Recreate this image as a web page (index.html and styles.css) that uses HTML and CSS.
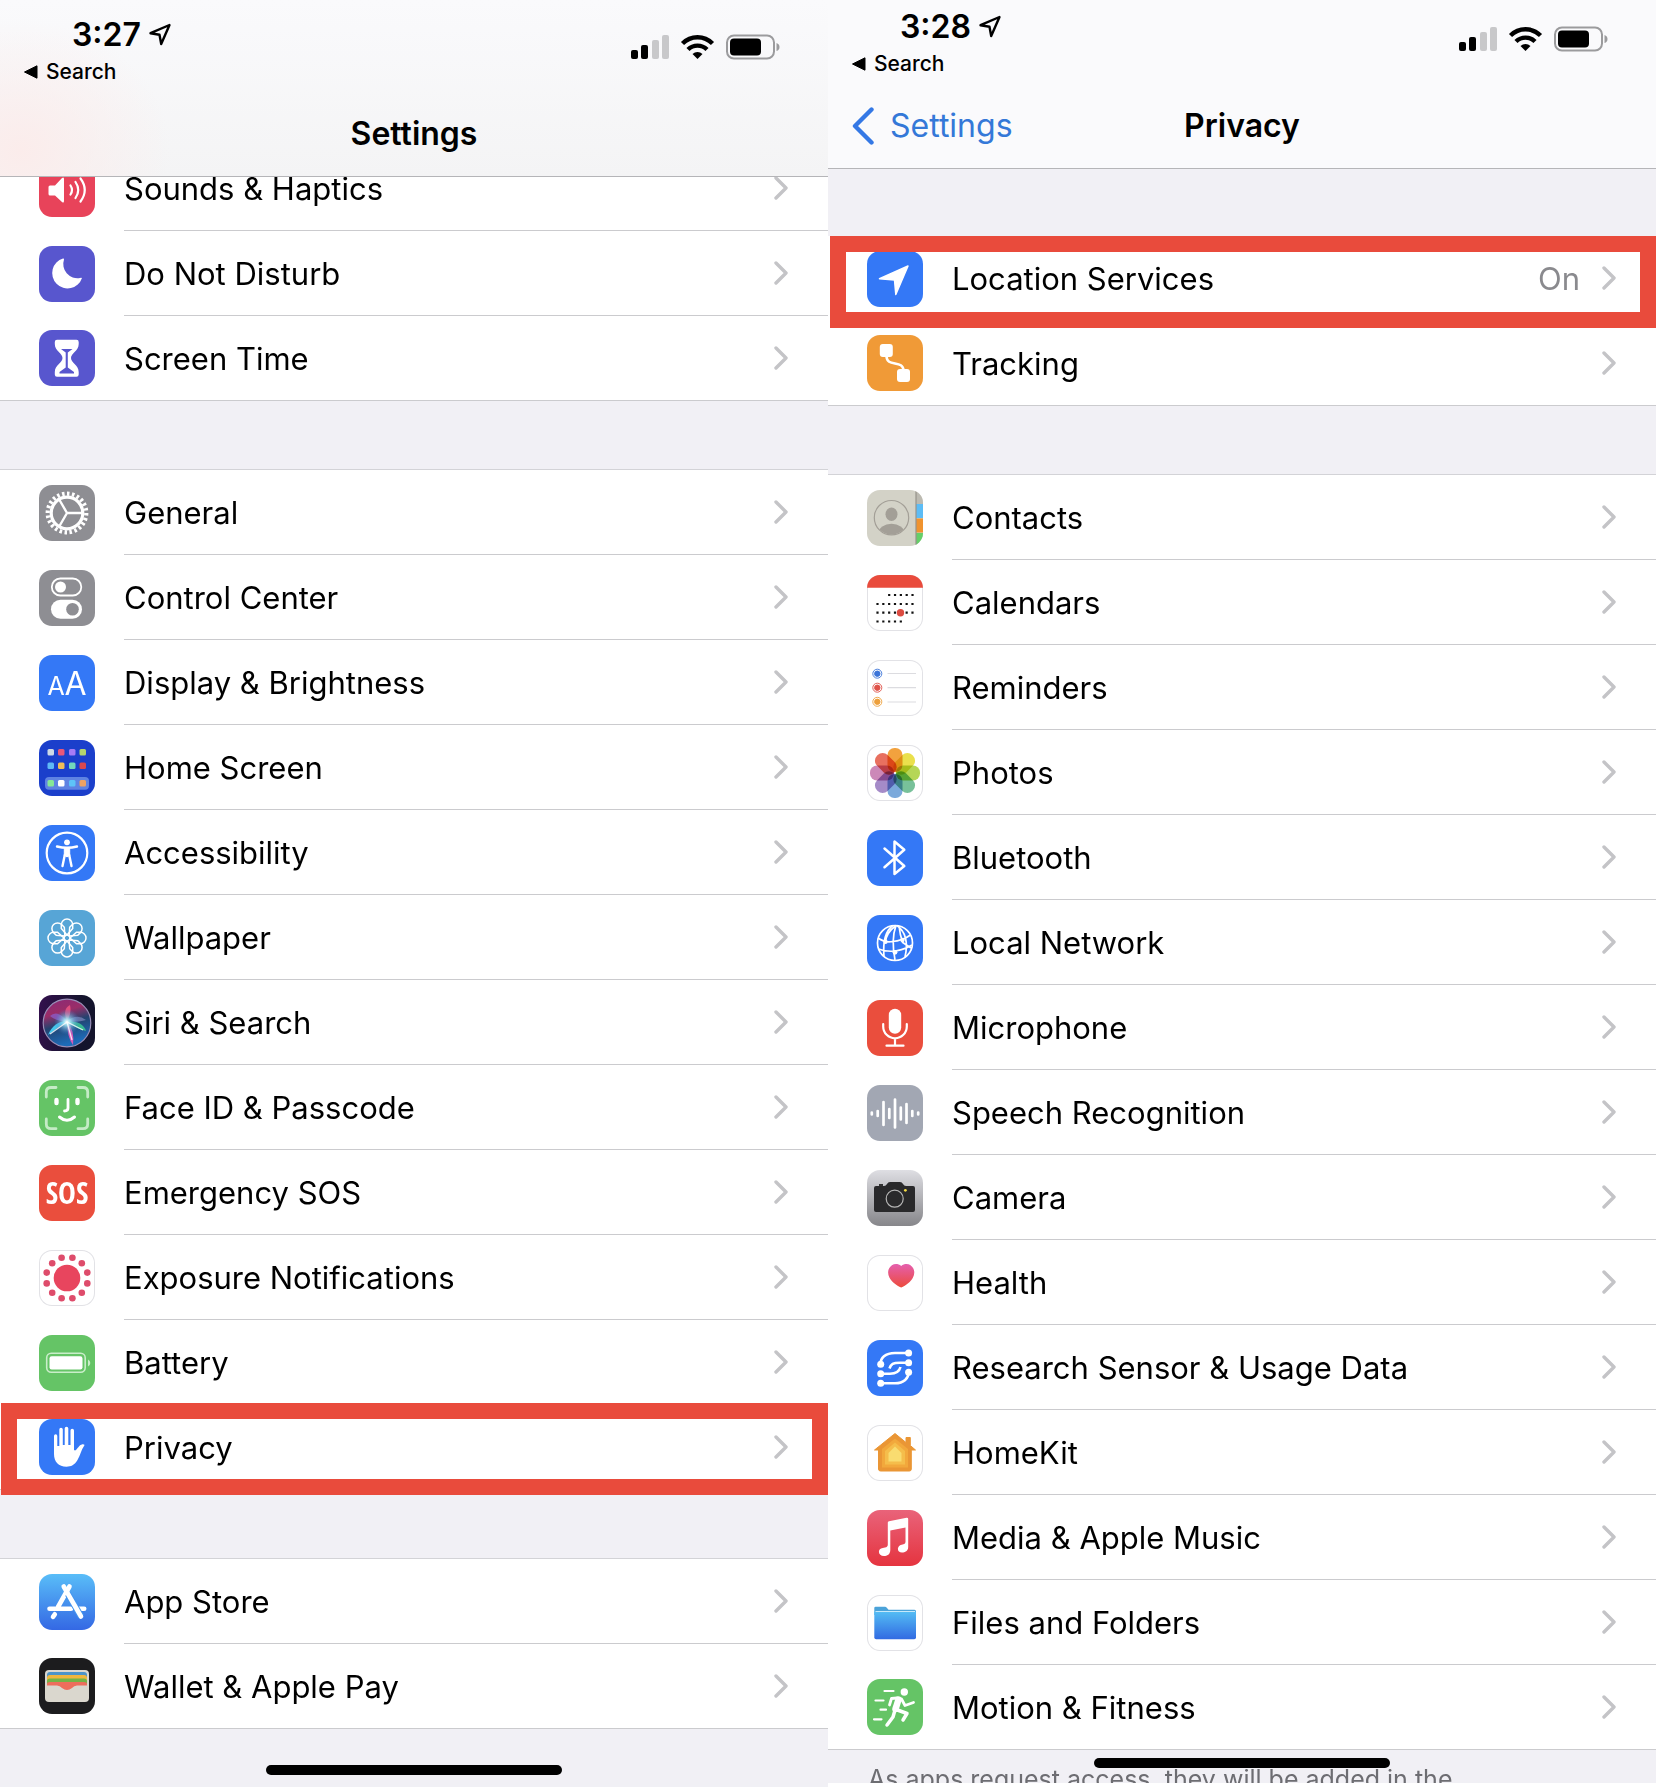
FILE: index.html
```html
<!DOCTYPE html>
<html lang="en">
<head>
<meta charset="utf-8">
<meta name="viewport" content="width=device-width, initial-scale=1">
<title>Settings and Privacy</title>
<link rel="stylesheet" href="styles.css">
</head>
<body>
<svg class="defs" aria-hidden="true">
  <symbol id="chevron" viewBox="0 0 14 24"><path d="M2 2 L12 12 L2 22" fill="none" stroke="#c4c4c7" stroke-width="3.4" stroke-linecap="round" stroke-linejoin="round"/></symbol>
  <symbol id="arrow" viewBox="0 0 24 24"><path d="M21.5 2 L2.5 10.2 L11.5 11.8 L13.2 21 Z" fill="none" stroke="#000" stroke-width="2.4" stroke-linejoin="round"/></symbol>
  <symbol id="triangle" viewBox="0 0 14 14"><path d="M0.5 7 L13 0.8 V13.2 Z" fill="#000" stroke="#000" stroke-linejoin="round"/></symbol>
  <symbol id="status-icons" viewBox="0 0 150 26">
    <rect x="0" y="16" width="7" height="9" rx="2"/><rect x="10" y="11" width="7" height="14" rx="2"/>
    <rect x="21" y="6" width="7" height="19" rx="2" fill="#c8c8ca"/><rect x="31" y="1" width="7" height="24" rx="2" fill="#c8c8ca"/>
    <g fill="none" stroke="#000" stroke-width="4.4"><path d="M51.5 9.5 A21 21 0 0 1 81.500 9.500"/><path d="M57 15.500 A13.500 13.500 0 0 1 76 15.500"/></g>
    <path d="M61.500 20 A7.500 7.500 0 0 1 71.500 20 L66.500 25 Z"/>
    <rect x="96" y="1.500" width="47" height="23" rx="7" fill="none" stroke="#9b9b9d" stroke-width="2"/>
    <rect x="99" y="4.500" width="31" height="17" rx="4"/><path d="M145.500 9 Q148.500 10 148.500 13 Q148.500 16 145.500 17 Z" fill="#9b9b9d"/>
  </symbol>
</svg>
<main class="screens">
  <section class="phone" aria-label="Settings">
    <header class="topbar topbar-scrolled">
      <div class="status">
        <div class="status-left">
          <div class="time">3:27 <svg class="loc"><use href="#arrow"/></svg></div>
          <a class="return" href="#"><svg class="tri"><use href="#triangle"/></svg>Search</a>
        </div>
        <svg class="status-icons"><use href="#status-icons"/></svg>
      </div>
      <nav class="navbar"><span></span><h1>Settings</h1><span></span></nav>
    </header>

    <ul class="group group-under">
      <li><a class="row" href="#"><svg class="tile red-pink" viewBox="0 0 56 56"><path d="M9.500 26 Q9.500 24.500 11 24.500 H16 L23 17 Q25 15.500 25 18 V40 Q25 42.500 23 41 L16 34.500 H11 Q9.500 34.500 9.500 33 Z" fill="#fff"/><g fill="none" stroke="#fff" stroke-width="2.200" stroke-linecap="round"><path d="M31.500 24.500 Q34.500 29 31.500 33.500"/><path d="M36.500 21 Q42 29 36.500 37"/><path d="M41.500 17.500 Q50 29 41.500 40.500"/></g></svg><span class="body"><span class="label">Sounds &amp; Haptics</span><svg class="chev"><use href="#chevron"/></svg></span></a></li>
      <li><a class="row" href="#"><svg class="tile indigo" viewBox="0 0 56 56"><path d="M24 12.500 A15.300 15.300 0 1 0 43 32 Q42 31.500 41 32 A14.200 14.200 0 0 1 25 13.500 Q25 12 24 12.500 Z" fill="#fff"/></svg><span class="body"><span class="label">Do Not Disturb</span><svg class="chev"><use href="#chevron"/></svg></span></a></li>
      <li><a class="row" href="#"><svg class="tile indigo" viewBox="0 0 56 56"><path d="M18 9.700 H37.500 Q39.700 9.700 39.700 12 V14 C39.700 21 32 23 32 28 C32 33 39.700 35 39.700 42 V44.500 Q39.700 46.700 37.500 46.700 H18 Q15.800 46.700 15.800 44.500 V42 C15.800 35 23.500 33 23.500 28 C23.500 23 15.800 21 15.800 14 V12 Q15.800 9.700 18 9.700 Z" fill="#fff"/><path d="M22 19 H33.500 L28.800 22.500 V37.500 L35 42 V43.500 H20.500 V42 L26.700 37.500 V22.500 Z" fill="#5856ce"/></svg><span class="body"><span class="label">Screen Time</span><svg class="chev"><use href="#chevron"/></svg></span></a></li>
    </ul>

    <ul class="group">
      <li><a class="row" href="#"><svg class="tile gray" viewBox="0 0 56 56"><g fill="none" stroke="#fff"><circle cx="28" cy="28" r="15.800" stroke-width="3.200"/><circle cx="28" cy="28" r="19.300" stroke-width="4.200" pathLength="96" stroke-dasharray="2 2"/><path d="M28 28 H43 M28 28 L20.500 15 M28 28 L20.500 41" stroke-width="2.400"/></g></svg><span class="body"><span class="label">General</span><svg class="chev"><use href="#chevron"/></svg></span></a></li>
      <li><a class="row" href="#"><svg class="tile gray" viewBox="0 0 56 56"><rect x="12.800" y="8.500" width="29.500" height="17" rx="8.500" fill="none" stroke="#fff" stroke-width="1.800"/><circle cx="21.500" cy="17" r="5.500" fill="#fff"/><rect x="12" y="29.700" width="31" height="19" rx="9.500" fill="#fff"/><circle cx="33.500" cy="39.200" r="6.300" fill="#8e8e93"/></svg><span class="body"><span class="label">Control Center</span><svg class="chev"><use href="#chevron"/></svg></span></a></li>
      <li><a class="row" href="#"><svg class="tile blue" viewBox="0 0 56 56"><text class="aa" x="17" y="40" font-size="25">A</text><text class="aa" x="36.500" y="40" font-size="32">A</text></svg><span class="body"><span class="label">Display &amp; Brightness</span><svg class="chev"><use href="#chevron"/></svg></span></a></li>
      <li><a class="row" href="#"><svg class="tile home" viewBox="0 0 56 56"><rect x="6" y="37" width="44" height="12.700" rx="4" fill="#5f83e2"/>
        <rect x="8.500" y="9" width="6.500" height="6.500" rx="1.500" fill="#ced9e6"/><rect x="19" y="9" width="6.500" height="6.500" rx="1.500" fill="#e8577a"/><rect x="30" y="9" width="6.500" height="6.500" rx="1.500" fill="#a67bf5"/><rect x="40.500" y="9" width="6.500" height="6.500" rx="1.500" fill="#b3d56e"/>
        <rect x="8.500" y="22.500" width="6.500" height="6.500" rx="1.500" fill="#5fb9f5"/><rect x="19" y="22.500" width="6.500" height="6.500" rx="1.500" fill="#f0bd58"/><rect x="30" y="22.500" width="6.500" height="6.500" rx="1.500" fill="#73d9bb"/><rect x="40.500" y="22.500" width="6.500" height="6.500" rx="1.500" fill="#d8484f"/>
        <rect x="8.500" y="40" width="6.500" height="6.500" rx="1.500" fill="#86e896"/><rect x="19" y="40" width="6.500" height="6.500" rx="1.500" fill="#fff"/><rect x="30" y="40" width="6.500" height="6.500" rx="1.500" fill="#5ec3f8"/><rect x="40.500" y="40" width="6.500" height="6.500" rx="1.500" fill="#eda263"/></svg><span class="body"><span class="label">Home Screen</span><svg class="chev"><use href="#chevron"/></svg></span></a></li>
      <li><a class="row" href="#"><svg class="tile blue" viewBox="0 0 56 56"><circle cx="28" cy="28" r="20.300" fill="none" stroke="#fff" stroke-width="2.200"/><circle cx="28" cy="17.300" r="2.900" fill="#fff"/><path d="M18 21.500 Q28 24 38 21.500 M28 24 V31" fill="none" stroke="#fff" stroke-width="2.400" stroke-linecap="round"/><path d="M25.300 22.500 H30.700 V31 H25.300 Z" fill="#fff" stroke="#fff" stroke-width="1"/><path d="M25.800 30 L23.500 41 M30.200 30 L32.500 41" stroke="#fff" stroke-width="2.400" stroke-linecap="round"/></svg><span class="body"><span class="label">Accessibility</span><svg class="chev"><use href="#chevron"/></svg></span></a></li>
      <li><a class="row" href="#"><svg class="tile sky" viewBox="0 0 56 56"><g transform="translate(28 28)" fill="none" stroke="#fff" stroke-width="1.500"><g id="petal-pair"><path id="petal" d="M0 -3 L-5.700 -9.500 V-13.300 A5.700 5.700 0 0 1 5.700 -13.300 V-9.500 Z"/><use href="#petal" transform="rotate(180)"/></g><use href="#petal-pair" transform="rotate(45)"/><use href="#petal-pair" transform="rotate(90)"/><use href="#petal-pair" transform="rotate(135)"/><circle r="3"/></g></svg><span class="body"><span class="label">Wallpaper</span><svg class="chev"><use href="#chevron"/></svg></span></a></li>
      <li><a class="row" href="#"><svg class="tile siri" viewBox="0 0 56 56"><defs><radialGradient id="sg"><stop offset="0" stop-color="#fff"/><stop offset=".25" stop-color="#a6e8f5" stop-opacity=".9"/><stop offset="1" stop-color="#3a78c8" stop-opacity="0"/></radialGradient><linearGradient id="sb" x2="0.300" y2="1"><stop offset="0" stop-color="#8a2a78"/><stop offset=".35" stop-color="#9a2d68"/><stop offset=".6" stop-color="#23436f"/><stop offset="1" stop-color="#1d6bb8"/></linearGradient></defs><circle cx="28" cy="28" r="23.800" fill="url(#sb)" stroke="#9a8fb8" stroke-width="1.200"/><path d="M28 26 L9 40 Q15 26 28 26 Z" fill="#45c5ea"/><path d="M28 26 Q44 26 47 36 Q38 34 28 27 Z" fill="#38b893"/><path d="M28 26 Q36 36 34 50 Q28 42 28 26 Z" fill="#d45ab8"/><path d="M28 26 Q23 14 31 10 Q33 18 28 26 Z" fill="#e0507f"/><path d="M28 26 Q18 14 11 21 Q18 27 28 26 Z" fill="#8c5ac4" opacity=".8"/><path d="M28 26 Q38 18 47 25 Q38 28 28 26 Z" fill="#7580b5" opacity=".8"/><circle cx="28" cy="27" r="13" fill="url(#sg)"/><path d="M11 39 L28 27 L44 35 M28 27 L33 45" fill="none" stroke="#fff" stroke-width="1.300" opacity=".8"/></svg><span class="body"><span class="label">Siri &amp; Search</span><svg class="chev"><use href="#chevron"/></svg></span></a></li>
      <li><a class="row" href="#"><svg class="tile green" viewBox="0 0 56 56"><g fill="none" stroke="#c5ebc6" stroke-width="2.800" stroke-linecap="round"><path d="M7.300 17 V12 Q7.300 7.500 12 7.500 H17 M39 7.500 H44 Q48.700 7.500 48.700 12 V17 M48.700 39 V44 Q48.700 48.700 44 48.700 H39 M17 48.700 H12 Q7.300 48.700 7.300 44 V39"/></g><g fill="none" stroke="#fff" stroke-linecap="round"><path d="M17.500 20 V23 M38.500 20 V23" stroke-width="4.400"/><path d="M29 19.500 V28 Q29 31 25.500 31" stroke-width="2.800"/><path d="M20.500 37 Q28 43.500 35.500 37" stroke-width="3"/></g></svg><span class="body"><span class="label">Face ID &amp; Passcode</span><svg class="chev"><use href="#chevron"/></svg></span></a></li>
      <li><a class="row" href="#"><svg class="tile red" viewBox="0 0 56 56"><text class="sos" x="28" y="38.500">SOS</text></svg><span class="body"><span class="label">Emergency SOS</span><svg class="chev"><use href="#chevron"/></svg></span></a></li>
      <li><a class="row" href="#"><svg class="tile white edge" viewBox="0 0 56 56"><g fill="#e8455e"><circle cx="28" cy="28" r="13.300"/><g fill="#de4c6b"><circle cx="33.400" cy="7.700" r="3.300"/><circle cx="42.800" cy="13.200" r="3.300"/><circle cx="48.300" cy="22.600" r="3.300"/><circle cx="48.300" cy="33.400" r="3.300"/><circle cx="42.800" cy="42.800" r="3.300"/><circle cx="33.400" cy="48.300" r="3.300"/><circle cx="22.600" cy="48.300" r="3.300"/><circle cx="13.200" cy="42.800" r="3.300"/><circle cx="7.700" cy="33.400" r="3.300"/><circle cx="7.700" cy="22.600" r="3.300"/><circle cx="13.200" cy="13.200" r="3.300"/><circle cx="22.600" cy="7.700" r="3.300"/></g></g></svg><span class="body"><span class="label">Exposure Notifications</span><svg class="chev"><use href="#chevron"/></svg></span></a></li>
      <li><a class="row" href="#"><svg class="tile green" viewBox="0 0 56 56"><rect x="7.700" y="18.300" width="38.500" height="19" rx="4.500" fill="none" stroke="#c9edc9" stroke-width="1.600"/><rect x="10.500" y="21.200" width="33" height="13.300" rx="2.200" fill="#fff"/><path d="M49 24.500 Q51.300 25.500 51.300 28 Q51.300 30.500 49 31.500 Z" fill="#c9edc9"/></svg><span class="body"><span class="label">Battery</span><svg class="chev"><use href="#chevron"/></svg></span></a></li>
      <li class="marked marked-end"><a class="row" href="#"><svg class="tile blue" viewBox="0 0 56 56"><path d="M15 17 Q15 15.300 16.700 15.300 Q18.300 15.300 18.300 17 V27 H20.300 V10.500 Q20.300 8.700 22 8.700 Q23.800 8.700 23.800 10.500 V26 H25.700 V9.500 Q25.700 7.700 27.500 7.700 Q29.300 7.700 29.300 9.500 V26 H31.500 V11.500 Q31.500 9.800 33.200 9.800 Q35 9.800 35 11.500 V31 L36 31.500 C39 30 39.500 26 43.500 25.200 Q46.500 25 45 27 C42 31 41.500 36 38.500 41 C35.500 46 32 47.700 27.500 47.700 C19.500 47.700 15 43 15 35 Z" fill="#fff"/></svg><span class="body"><span class="label">Privacy</span><svg class="chev"><use href="#chevron"/></svg></span></a></li>
    </ul>

    <ul class="group">
      <li><a class="row" href="#"><svg class="tile store" viewBox="0 0 56 56"><g fill="none" stroke="#fff" stroke-width="4.600" stroke-linecap="round"><path d="M30.500 12.500 L19 33 M10.500 34.700 H32 M40 34.700 H45.200 M15.800 40.300 L14 42.800"/></g><path d="M29 20 L42 42.500" stroke="#4596ef" stroke-width="6.500"/><path d="M24.700 12.500 L42 42.500" stroke="#fff" stroke-width="4.600" stroke-linecap="round"/></svg><span class="body"><span class="label">App Store</span><svg class="chev"><use href="#chevron"/></svg></span></a></li>
      <li><a class="row" href="#"><svg class="tile black" viewBox="0 0 56 56"><rect x="6" y="12" width="44" height="32" rx="4" fill="#dad7ce"/><path d="M8 17 Q8 14 11 14 H45 Q48 14 48 17 V20 H8 Z" fill="#4c94c8"/><path d="M8 20 Q8 17 11 17 H45 Q48 17 48 20 V24 H8 Z" fill="#f0b63c"/><path d="M8 23 Q8 20.500 11 20.500 H45 Q48 20.500 48 23 V26 H8 Z" fill="#74b347"/><path d="M8 26 Q8 24 11 24 H45 Q48 24 48 26 V27.500 H38 Q35 27.500 33 30 Q28 34 23 30 Q21 27.500 18 27.500 H8 Z" fill="#ed6d5c"/></svg><span class="body"><span class="label">Wallet &amp; Apple Pay</span><svg class="chev"><use href="#chevron"/></svg></span></a></li>
    </ul>
    <footer class="foot foot-empty"></footer>
    <div class="home-bar"></div>
  </section>

  <section class="phone" aria-label="Privacy">
    <header class="topbar">
      <div class="status">
        <div class="status-left">
          <div class="time">3:28 <svg class="loc"><use href="#arrow"/></svg></div>
          <a class="return" href="#"><svg class="tri"><use href="#triangle"/></svg>Search</a>
        </div>
        <svg class="status-icons"><use href="#status-icons"/></svg>
      </div>
      <nav class="navbar"><a class="back" href="#"><svg viewBox="0 0 22 38"><path d="M19.500 2.500 L3 19 L19.500 35.500" fill="none" stroke="#3478e5" stroke-width="4.400" stroke-linecap="round" stroke-linejoin="round"/></svg>Settings</a><h1>Privacy</h1><span></span></nav>
    </header>

    <ul class="group group-top">
      <li class="marked"><a class="row" href="#"><svg class="tile blue" viewBox="0 0 56 56"><path d="M41 15 L28.800 43.500 L27.500 29 L12.500 27.700 Z" fill="#fff" stroke="#fff" stroke-width="1.500" stroke-linejoin="round"/></svg><span class="body"><span class="label">Location Services</span><span class="value">On</span><svg class="chev"><use href="#chevron"/></svg></span></a></li>
      <li><a class="row" href="#"><svg class="tile orange" viewBox="0 0 56 56"><rect x="12.800" y="9" width="13" height="13" rx="3" fill="#fff"/><rect x="30" y="34" width="13" height="13" rx="3" fill="#fff"/><path d="M19.500 21 C19.500 33 36.500 24 36.500 36" fill="none" stroke="#fff" stroke-width="2.600"/></svg><span class="body"><span class="label">Tracking</span><svg class="chev"><use href="#chevron"/></svg></span></a></li>
    </ul>

    <ul class="group">
      <li><a class="row" href="#"><svg class="tile contacts" viewBox="0 0 56 56"><path d="M49 0 H56 V14 H49 Z" fill="#bcbab1"/><path d="M49 14 H56 V28 H49 Z" fill="#5cbcf5"/><path d="M49 28.500 H56 V42.500 H49 Z" fill="#f0932f"/><path d="M49 43 H56 V56 H49 Z" fill="#65cf68"/><path d="M49 0 V56" stroke="#96938a" stroke-width="1.200"/><clipPath id="cc"><circle cx="24.500" cy="27.700" r="16.800"/></clipPath><g clip-path="url(#cc)" fill="#a39f97"><ellipse cx="24.500" cy="24.200" rx="6" ry="6.800"/><ellipse cx="24.500" cy="43" rx="13" ry="9.300"/></g><circle cx="24.500" cy="27.700" r="17.200" fill="none" stroke="#a39f97" stroke-width="1.200"/></svg><span class="body"><span class="label">Contacts</span><svg class="chev"><use href="#chevron"/></svg></span></a></li>
      <li><a class="row" href="#"><svg class="tile white edge" viewBox="0 0 56 56"><path d="M-1 -1 H57 V12.700 H-1 Z" fill="#e94b3c"/><g fill="none" stroke="#111" stroke-width="2.200" stroke-dasharray="2.200 3.630"><path d="M21.100 20 H47"/><path d="M9.400 29 H47"/><path d="M9.400 37.700 H47"/><path d="M9.400 46.500 H35"/></g><circle cx="33.500" cy="37.700" r="3.700" fill="#dc4b41"/></svg><span class="body"><span class="label">Calendars</span><svg class="chev"><use href="#chevron"/></svg></span></a></li>
      <li><a class="row" href="#"><svg class="tile white edge" viewBox="0 0 56 56"><g stroke="#dcdce0" stroke-width="1.200"><path d="M20.500 13.500 H49 M20.500 27.700 H49 M20.500 42 H49"/></g><g fill="#3b74d8" stroke="#3b74d8"><circle cx="10.300" cy="13.700" r="2.700"/><circle cx="10.300" cy="13.700" r="4.500" fill="none" stroke-width=".9"/></g><g fill="#df5148" stroke="#df5148"><circle cx="10.300" cy="27.700" r="2.700"/><circle cx="10.300" cy="27.700" r="4.500" fill="none" stroke-width=".9"/></g><g fill="#eda03c" stroke="#eda03c"><circle cx="10.300" cy="41.800" r="2.700"/><circle cx="10.300" cy="41.800" r="4.500" fill="none" stroke-width=".9"/></g></svg><span class="body"><span class="label">Reminders</span><svg class="chev"><use href="#chevron"/></svg></span></a></li>
      <li><a class="row" href="#"><svg class="tile white edge photos" viewBox="0 0 56 56"><g transform="translate(28 28)"><rect x="-7.500" y="-25" width="15" height="24" rx="7" fill="#f2a23e"/><rect x="-7.500" y="-25" width="15" height="24" rx="7" fill="#eae04c" transform="rotate(45)"/><rect x="-7.500" y="-25" width="15" height="24" rx="7" fill="#b5d656" transform="rotate(90)"/><rect x="-7.500" y="-25" width="15" height="24" rx="7" fill="#78c19a" transform="rotate(135)"/><rect x="-7.500" y="-25" width="15" height="24" rx="7" fill="#7ba9db" transform="rotate(180)"/><rect x="-7.500" y="-25" width="15" height="24" rx="7" fill="#a58bc8" transform="rotate(225)"/><rect x="-7.500" y="-25" width="15" height="24" rx="7" fill="#cc88b8" transform="rotate(270)"/><rect x="-7.500" y="-25" width="15" height="24" rx="7" fill="#e8705f" transform="rotate(315)"/></g></svg><span class="body"><span class="label">Photos</span><svg class="chev"><use href="#chevron"/></svg></span></a></li>
      <li><a class="row" href="#"><svg class="tile blue" viewBox="0 0 56 56"><path d="M17.500 37.300 L37.300 19.800 L27.500 11.500 V44 L37.300 36 L17.500 18.500" fill="none" stroke="#fff" stroke-width="2.500" stroke-linecap="round" stroke-linejoin="round"/></svg><span class="body"><span class="label">Bluetooth</span><svg class="chev"><use href="#chevron"/></svg></span></a></li>
      <li><a class="row" href="#"><svg class="tile blue" viewBox="0 0 56 56"><g fill="none" stroke="#fff" stroke-width="1.700"><circle cx="28" cy="28" r="17.500"/><path d="M26 10.500 Q15 18 17 42 M29 10.500 Q19 18 18.500 27 M29 10.500 Q24 24 28 45 M30 10.500 Q43 20 38 42 M32 11 Q33 20 35.500 27 M11 23 Q18 28 25.500 26.500 Q35 26 43.500 20 M11.500 34 Q28 40 45 30 M35 27 L44 33"/></g><g fill="#fff"><circle cx="18.500" cy="26.700" r="2.200"/><circle cx="35.500" cy="25" r="2.200"/><circle cx="28" cy="37.300" r="2.400"/></g></svg><span class="body"><span class="label">Local Network</span><svg class="chev"><use href="#chevron"/></svg></span></a></li>
      <li><a class="row" href="#"><svg class="tile red" viewBox="0 0 56 56"><rect x="21.800" y="8.700" width="12.400" height="25" rx="6.200" fill="#fff"/><path d="M16.200 24 V26.500 A11.800 11.800 0 0 0 39.800 26.500 V24 M28 38.500 V45.700 M19.500 45.700 H36.500" fill="none" stroke="#fff" stroke-width="2.200" stroke-linecap="round"/></svg><span class="body"><span class="label">Microphone</span><svg class="chev"><use href="#chevron"/></svg></span></a></li>
      <li><a class="row" href="#"><svg class="tile slate" viewBox="0 0 56 56"><path d="M4.800 27.500 V29.500 M10.700 26 V31 M16.500 17 V40 M22.300 24 V33 M28 14.500 V42.500 M33.800 22.500 V34.500 M39.500 19 V38 M45.300 26 V31 M51.200 27.500 V29.500" stroke="#fff" stroke-width="2.700" stroke-linecap="round"/></svg><span class="body"><span class="label">Speech Recognition</span><svg class="chev"><use href="#chevron"/></svg></span></a></li>
      <li><a class="row" href="#"><svg class="tile camera" viewBox="0 0 56 56"><path d="M12 14 H16 V16 H12 Z" fill="#333"/><path d="M9 16 H17 Q19 16 20 14 Q21 12 23 12 H33 Q35 12 36 14 Q37 16 39 16 H46 Q48 16 48 18 V40 Q48 42 46 42 H9 Q7 42 7 40 V18 Q7 16 9 16 Z" fill="#29292b"/><circle cx="27.700" cy="28.700" r="8.500" fill="none" stroke="#b5b5b5" stroke-width="1.200"/><circle cx="38.400" cy="20.300" r="1.400" fill="#f4dc45"/></svg><span class="body"><span class="label">Camera</span><svg class="chev"><use href="#chevron"/></svg></span></a></li>
      <li><a class="row" href="#"><svg class="tile white edge" viewBox="0 0 56 56"><defs><linearGradient id="hg" x2="0" y2="1"><stop offset="0" stop-color="#e55fae"/><stop offset="1" stop-color="#ec4b3c"/></linearGradient></defs><path d="M34.200 11 C37 8.500 41 8.500 43.500 10.200 C47.500 13 48.300 18 46 22.500 C44 26.500 39 30.500 34.200 32.500 C29.400 30.500 24.400 26.500 22.400 22.500 C20.100 18 20.900 13 24.900 10.200 C27.400 8.500 31.400 8.500 34.200 11 Z" fill="url(#hg)"/></svg><span class="body"><span class="label">Health</span><svg class="chev"><use href="#chevron"/></svg></span></a></li>
      <li><a class="row" href="#"><svg class="tile blue" viewBox="0 0 56 56"><g fill="none" stroke="#fff" stroke-width="2.600"><path d="M41.600 13 H28 C18 13 13.500 18 13.500 24"/><path d="M41.600 22.700 H33 C26 22.700 24 24 22.500 28.500 "/><path d="M13.500 33.700 H23 C30 33.700 32.500 31 33.500 27"/><path d="M13.500 43.300 H28 C37 43.300 41.600 38 41.600 32.500"/></g><g fill="#fff"><circle cx="41.600" cy="13" r="3.500"/><circle cx="13.700" cy="24.200" r="3.500"/><circle cx="41.600" cy="22.700" r="3.500"/><circle cx="13.700" cy="33.700" r="3.500"/><circle cx="41.600" cy="32.300" r="3.500"/><circle cx="13.700" cy="43.300" r="3.500"/></g></svg><span class="body"><span class="label">Research Sensor &amp; Usage Data</span><svg class="chev"><use href="#chevron"/></svg></span></a></li>
      <li><a class="row" href="#"><svg class="tile white edge" viewBox="0 0 56 56"><path d="M28 8.500 L39 17.500 V12.500 H43.300 V20.500 L48.500 25 H44.300 V44 Q44.300 46 42.500 46 H13.500 Q11.500 46 11.500 44 V25 H7.500 Z" fill="#ea9635" stroke="#ea9635" stroke-linejoin="round"/><path d="M28 13.500 L41 24 V42.500 H15 V24 Z" fill="#f2a83c"/><path d="M28 17.500 L38 26 V39.500 H18 V26 Z" fill="#f5bd4b"/><path d="M28 21.500 L34.500 28 V36.500 H21.500 V28 Z" fill="#f9dc70"/></svg><span class="body"><span class="label">HomeKit</span><svg class="chev"><use href="#chevron"/></svg></span></a></li>
      <li><a class="row" href="#"><svg class="tile music" viewBox="0 0 56 56"><path d="M20.800 12.500 Q20.800 11.500 22 11.200 L39.500 7.700 Q41.200 7.500 41.200 9 V37 C41.200 41 38 42.500 35 42.500 C32 42.500 30.500 40.500 31 38 C31.600 35.500 34 34.800 36.500 34.300 Q38.500 34 38.500 32 V17.500 L23.300 20.500 V40 C23.300 44.500 20 46 17 46 C13.500 46 11.500 44 12 41.200 C12.500 38.500 15 38 18 37.500 Q20.800 37 20.800 34.500 Z" fill="#fff"/></svg><span class="body"><span class="label">Media &amp; Apple Music</span><svg class="chev"><use href="#chevron"/></svg></span></a></li>
      <li><a class="row" href="#"><svg class="tile white edge" viewBox="0 0 56 56"><defs><linearGradient id="fg" x2="0" y2="1"><stop offset="0" stop-color="#54bdf4"/><stop offset="1" stop-color="#316ae2"/></linearGradient></defs><path d="M7.300 13 Q7.300 11.700 8.600 11.700 H18 Q19 11.700 20 13 L21.500 14.700 H47.500 Q49 14.700 49 16.200 V20 H7.300 Z" fill="#4ba3d9"/><path d="M7.300 16.500 H49 V42.500 Q49 44.300 47.200 44.300 H9.100 Q7.300 44.300 7.300 42.500 Z" fill="url(#fg)"/><path d="M8.500 16.500 H48" stroke="#c6e9fb" stroke-width="1.200"/></svg><span class="body"><span class="label">Files and Folders</span><svg class="chev"><use href="#chevron"/></svg></span></a></li>
      <li><a class="row" href="#"><svg class="tile green" viewBox="0 0 56 56"><circle cx="37.300" cy="13" r="3.700" fill="#fff"/><g fill="none" stroke="#fff" stroke-linecap="round" stroke-linejoin="round"><path d="M31.500 20.500 L28.500 30" stroke-width="6.500"/><path d="M30 19 L24.500 19.500 L22.500 26 M34.500 20 L38 26.500 L46.500 23.500" stroke-width="2.800"/><path d="M30.500 31 L40 34.500 L36 41" stroke-width="3.500"/><path d="M28 31 L26 38 L20 46" stroke-width="3.500"/><path d="M17.500 12 H26.500 M8.500 21.500 H16.500 M13.500 30.700 H19 M7 40.300 H14.500" stroke-width="2.200"/></g></svg><span class="body"><span class="label">Motion &amp; Fitness</span><svg class="chev"><use href="#chevron"/></svg></span></a></li>
    </ul>
    <footer class="foot foot-note"><p>As apps request access, they will be added in the</p></footer>
    <div class="home-bar home-bar-raised"></div>
  </section>
</main>
</body>
</html>
```
FILE: styles.css
```css
* { box-sizing: border-box; }

body {
  margin: 0;
  background: #fff;
  color: #000;
  font-family: Inter, "Liberation Sans", sans-serif;
  font-size: 31px;
  line-height: 40px;
}

a { color: inherit; text-decoration: none; }
ul, h1, p { margin: 0; padding: 0; }
ul { list-style: none; }
svg { display: block; flex: none; }
.defs { position: absolute; width: 0; height: 0; }

.screens {
  display: grid;
  grid-template-columns: 1fr 1fr;
  align-items: start;
  padding-right: 8px;
}

.phone {
  position: relative;
  min-width: 0;
  overflow: hidden;
  background: #f1f0f5;
}

/* Status and navigation bars */
.topbar {
  position: relative;
  z-index: 2;
  border-bottom: 1px solid #b5b5b8;
  background: #fafafc;
}
.topbar-scrolled {
  padding-top: 8px;
  background:
    radial-gradient(ellipse 150px 130px at 20px 150px, #fbeceb, #fbeceb00),
    linear-gradient(#fafafc, #f4f4f5);
}
.status {
  display: flex;
  justify-content: space-between;
  align-items: flex-start;
  height: 84px;
  padding: 7px 47px 0 24px;
}
.status-left {
  display: flex;
  flex-direction: column;
  align-items: flex-start;
  gap: 5px;
}
.time {
  display: flex;
  align-items: center;
  gap: 7px;
  margin-left: 48px;
  font-size: 32px;
  font-weight: 600;
}
.loc { width: 24px; height: 24px; }
.return {
  display: flex;
  align-items: center;
  gap: 8px;
  font-size: 21px;
  font-weight: 500;
  line-height: 24px;
}
.tri { width: 14px; height: 14px; }
.status-icons { width: 150px; height: 26px; margin-top: 19px; }
.navbar {
  display: grid;
  grid-template-columns: 1fr auto 1fr;
  align-items: center;
  height: 84px;
  padding: 0 24px;
}
h1 { font-size: 32px; font-weight: 600; line-height: 40px; }
.back { display: flex; align-items: center; gap: 16px; color: #3478d8; font-size: 32px; }
.back svg { width: 22px; height: 38px; }

/* Lists */
.group { background: #fff; }
.group + .group { margin-top: 68px; border-top: 1px solid #d3d3d7; }
.group-under { margin-top: -31px; }
.group-top { margin-top: 67px; }
.row {
  display: flex;
  align-items: center;
  gap: 29px;
  height: 85px;
  padding-left: 39px;
}
.body {
  display: flex;
  flex: 1;
  align-items: center;
  align-self: stretch;
  min-width: 0;
  padding-right: 40px;
  border-bottom: 1px solid #cbcbce;
}
li:last-child .row { border-bottom: 1px solid #cbcbce; }
li:last-child .body { border-bottom: 0; }
.label, .value { padding-top: 2px; white-space: nowrap; }
.label { flex: 1; }
.value { margin-right: 22px; color: #8a8a8e; }
.chev { width: 14px; height: 24px; }

/* Red frame laid over a row */
.marked { position: relative; z-index: 1; }
.marked::after {
  content: "";
  position: absolute;
  inset: 0 0 -7px 2px;
  border: 16px solid #e94b3c;
  pointer-events: none;
}
.marked-end::after { inset: -2px 0 -5px 1px; }

/* Icon tiles */
.tile { width: 56px; height: 56px; border-radius: 13px; overflow: hidden; }
.red-pink { background: #e8435a; }
.indigo { background: #5856ce; }
.gray { background: #8e8e93; }
.blue { background: #3478f6; }
.home { background: #1b3fcb; }
.sky { background: #57a5d6; }
.siri { background: linear-gradient(100deg, #34104e, #14142c 70%); }
.green { background: #65c466; }
.red { background: #ea4e3d; }
.orange { background: #f09a37; }
.slate { background: #a2a7b3; }
.black { background: #1c1c1e; }
.store { background: linear-gradient(#59bdf8, #3468e4); }
.contacts { background: #d3d2c7; }
.camera { background: linear-gradient(#dedee3, #86868a); }
.music { background: linear-gradient(#e9637a, #e5343f); }
.white { background: #fff; }
.edge { box-shadow: inset 0 0 0 1px #e2e2e6; }
.photos rect { mix-blend-mode: multiply; }
.aa { fill: #fff; text-anchor: middle; }
.sos {
  fill: #fff;
  font-family: "Liberation Sans Narrow", "Open Sans Condensed", Roboto, sans-serif;
  font-size: 30px;
  font-weight: 700;
  text-anchor: middle;
}

/* Screen bottoms */
.foot { overflow: hidden; color: #6d6d72; font-size: 25px; line-height: 32px; }
.foot-empty { height: 58px; }
.foot-note { height: 33px; padding: 13px 40px 0; white-space: nowrap; }
.home-bar {
  position: absolute;
  bottom: 12px;
  left: 50%;
  width: 296px;
  height: 10px;
  margin-left: -148px;
  border-radius: 5px;
  background: #000;
}
.home-bar-raised { bottom: 15px; }
```
